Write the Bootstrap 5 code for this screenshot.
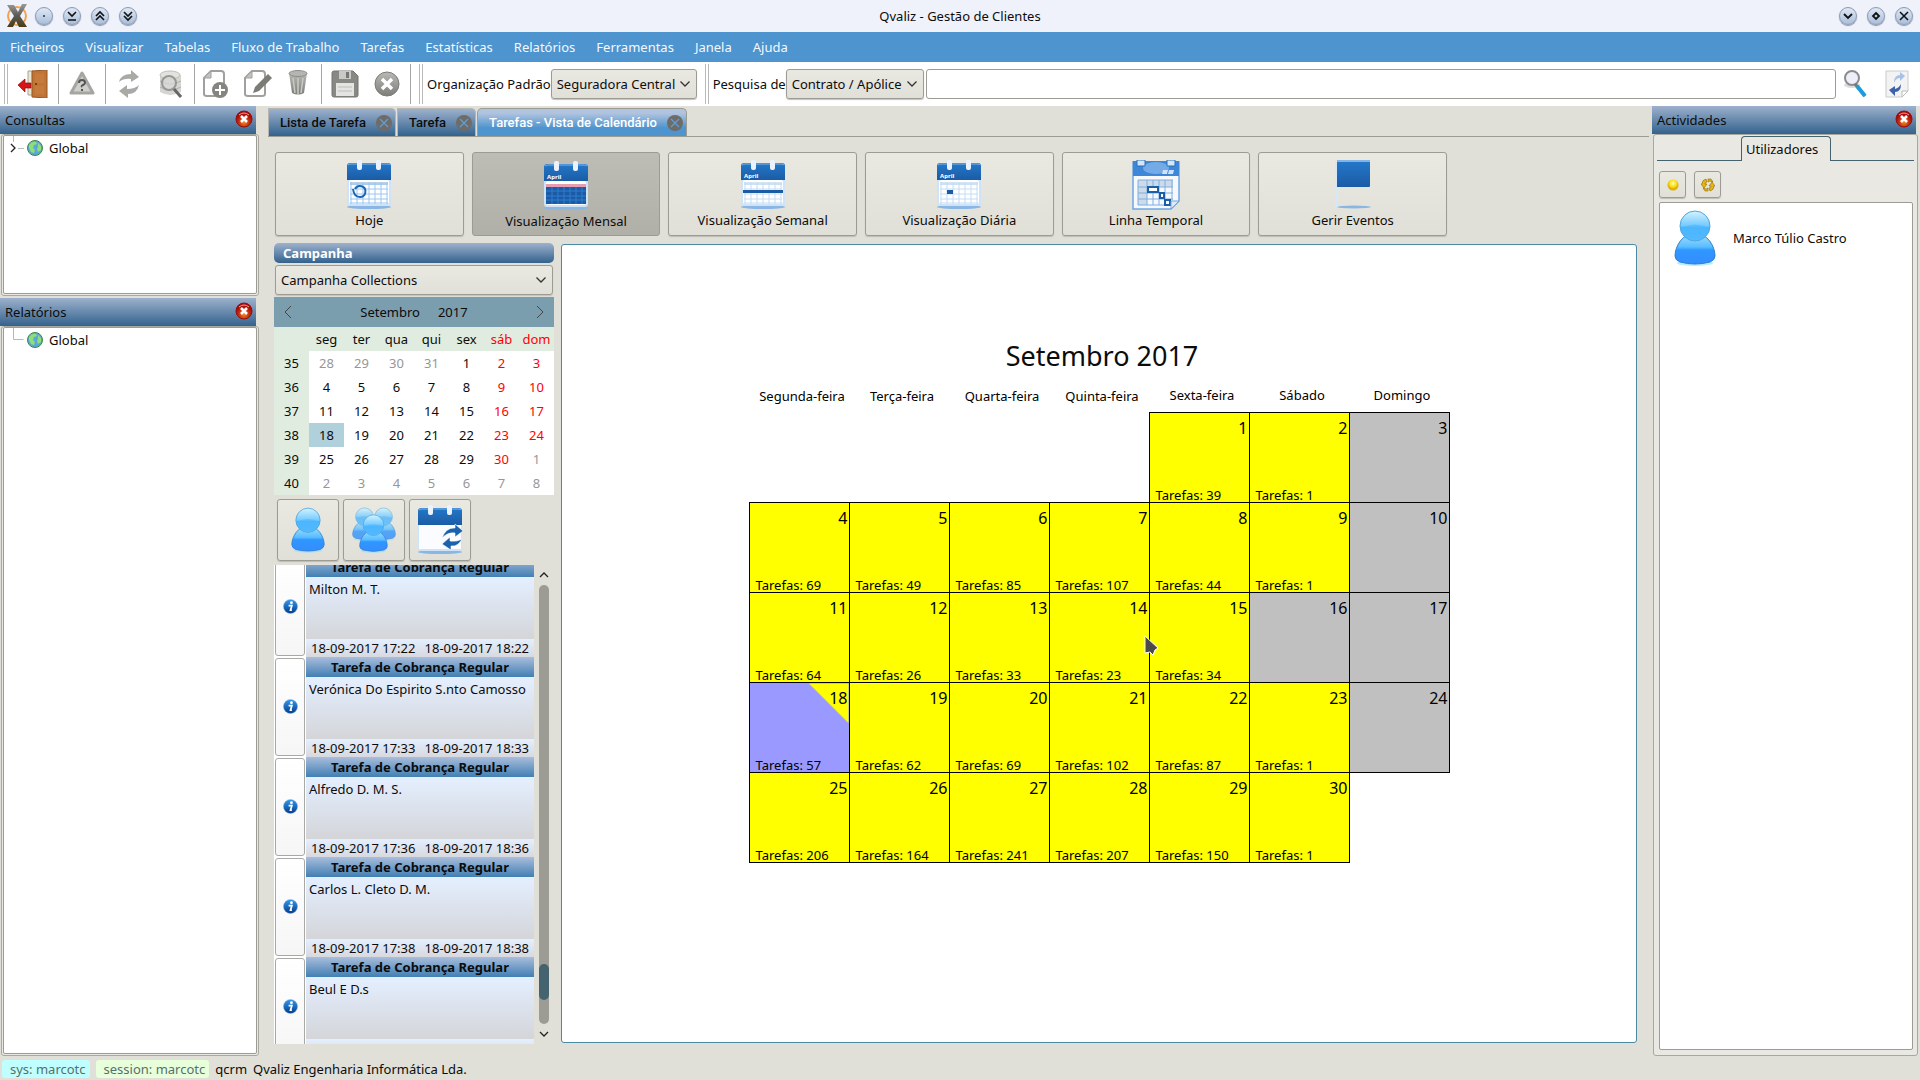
<!DOCTYPE html>
<html lang="pt">
<head>
<meta charset="utf-8">
<meta name="viewport" content="width=device-width, initial-scale=1">
<title>Qvaliz - Gestão de Clientes</title>
<link href="https://cdn.jsdelivr.net/npm/bootstrap@5.3.0/dist/css/bootstrap.min.css" rel="stylesheet">
<style>
body{font-family:"Noto Sans",sans-serif;font-size:13px;line-height:18px;color:#0c0c0c;background:#e0dfd8}
button{color:inherit}
svg{display:block;flex:none}
.titlebar{height:32px;background:#eff2fb;padding:0 7px}
.win-title{padding-right:56px}
.btn-row{gap:10px}
.round-btn{width:18px;height:18px;border:1px solid #8d9bb0;border-radius:50%;background:linear-gradient(#dfe8f5,#a9bfdc);padding:0;box-shadow:0 1px 1px #8a93a3}
.menu-strip{height:30px;background:#4e94ce}
.menu-strip a{color:#f4f8fc;padding:0 11px 0 10px;text-decoration:none;line-height:30px}
.tools{height:44px;background:#fff}
.grip{width:4px;height:40px;border:solid #b9b9b6;border-width:0 1px}
.rule{width:1px;height:40px;background:#a5a5a2}
.tool{border:0;background:none;padding:0;height:40px;width:46px;display:flex;align-items:center;justify-content:center;flex:none}
.tool.narrow{width:38px}
.tool.mid{width:42px}
.combo{height:30px;padding:0 16px 0 5px;font-size:13px;line-height:18px;color:#0c0c0c;border:1px solid #9c9b94;border-radius:3px;background:url("data:image/svg+xml,%3Csvg xmlns='http://www.w3.org/2000/svg' width='12' height='8'%3E%3Cpath d='M1.500 1.500L6 6L10.500 1.500' fill='none' stroke='%23333' stroke-width='1.300'/%3E%3C/svg%3E") no-repeat right 5px center/12px 8px,linear-gradient(#e9e9e2,#e0dfd8);box-shadow:0 1px 1px #c4c3bc}
#org{width:146px}
#kind{width:138px}
#camp{width:278px;margin:2px 1px}
.query{height:30px;border:1px solid #9c9b94;border-radius:3px;padding:0 6px;font-size:13px;margin-left:2px}
.dock-head{height:28px;background:linear-gradient(#9db1cd,#33628d);padding:0 3px 0 5px}
.dock-left{width:259px;gap:2px}
.dock-left .dock-head{margin-right:3px}
.dock-right{width:266px;margin-right:2px}
.dock-right .dock-head{margin-right:2px}
.dock-frame{border:1px solid #a8a7a0;border-radius:3px;background:#e9e8e2;margin-left:1px}
.dock-left .dock-frame{padding:0 1px 1px}
.dock-right .dock-frame{padding:1px 3px 5px}
.close-dot{border:0;background:none;padding:0;margin:0 0 3px}
.well{background:#fff;border:1px solid #9c9b94;border-radius:2px}
.node-icon{margin-top:4px}
.node-name{margin:3px 6px}
.doc-tabs{height:31px;border-bottom:1px solid #9c9b94;padding-top:2px;gap:1px}
.doc-tab{font-family:Roboto,sans-serif;font-weight:500;font-size:13px;color:#0c0c0c;background:linear-gradient(#9db1cd,#33628d);border:1px solid #b5b5b1;border-bottom:0;border-radius:0 5px 0 0;padding:1px 3px 0 11px;gap:10px;text-decoration:none}
.doc-tab.on{color:#fff;background:linear-gradient(#b1c4df 15%,#4e94ce 70%);border-color:#9c9b94;border-radius:5px 5px 0 0}
.page-main{margin:0 3px 0 9px;min-width:0}
.page-body{padding:15px 12px 12px 6px;gap:7px;min-height:0}
.view-grid{display:grid;grid-template-columns:repeat(6,1fr);gap:8px;max-width:1173px;padding-left:1px}
.face{border:1px solid #9c9b94;border-radius:3px;background:linear-gradient(#e9e9e2,#e0dfd8);box-shadow:0 1px 1px #bdbcb5;padding:0}
.view-btn{height:84px;display:flex;flex-direction:column;align-items:center;padding-top:7px;gap:1px}
.view-btn.on{background:linear-gradient(#bdbcb5,#b1b0a8);box-shadow:none;padding-top:8px}
.split{gap:7px;min-height:0}
.side{width:280px}
.camp{height:20px;background:linear-gradient(#9db1cd,#33628d);border-radius:5px;color:#fff;font-weight:700;padding:0 9px;line-height:20px}
.nav-month{height:30px;background:#7a9eae;padding:0 8px}
.nav-month .tool{width:12px}
.nav-date{gap:18px}
.mini{width:100%;table-layout:fixed;text-align:center;background:#fff}
.mini th,.mini td{height:24px;padding:0;font-weight:400}
.mini th{background:#e0ecdf}
.mini .off{color:#979797}.mini .we{color:#f00}
.mini .now{background:#b0d0dc}
.who-row{padding:4px 3px}
.who{width:62px;height:62px;display:flex;align-items:center;justify-content:center}
.feed{background:#fff;overflow:hidden}
.feed-roll{margin-top:-8px}
.job{height:100px;padding-left:1px}
.job-info{width:30px;margin:1px 0;background:linear-gradient(#fff,#f6f6f6);border:1px solid #a8a8a5;border-radius:3px;padding:0;display:flex;align-items:center;justify-content:center}
.job-main{margin-left:1px}
.job-head{height:20px;line-height:20px;font-weight:700;text-align:center;background:linear-gradient(#a9bddb,#417fb3)}
.job-name{height:62px;padding:3px;background:linear-gradient(#e4efff,#d4d5d9)}
.job-time{height:18px;padding:0 5px;background:linear-gradient(#e4efff,#d8d9de)}
.rail{width:20px}
.rail button{height:20px;width:20px;border:0;background:none;padding:0;display:flex;align-items:center;justify-content:center}
.track{width:10px;border-radius:5px;background:#9c9b94;flex:1;display:flex;flex-direction:column;padding-bottom:24px;justify-content:flex-end}
.thumb{height:36px;border-radius:5px;background:#45626f}
.board-wrap{padding:1px 0}
.board{background:#fff;border:1px solid #4a8aa5;border-radius:3px;padding-top:93px}
.month-name{font-size:27px;line-height:36px;font-weight:400;margin:0;padding-left:6px}
.month{table-layout:fixed;width:701px;border-collapse:collapse;color:#000}
.month th{height:39px;text-align:center;vertical-align:bottom;font-weight:400;padding:0 0 8px 6px}
.month td{height:90px;padding:0}
.month .busy,.month .idle{border:1px solid #000;vertical-align:top}
.month .busy{background:#ff0}.month .idle{background:#c0c0c0}
.month .today{background:linear-gradient(225deg,#ff0 28px,#99f 28px)}
.slot{height:88px;display:flex;flex-direction:column;justify-content:space-between;padding:4px 1px 0 6px}
.slot b{font-size:16px;line-height:22px;font-weight:400;text-align:right}
.slot span{line-height:12px}
.cursor{left:1144px;top:635px}
.page-tabs{height:25px}
.page-tabs i{border-bottom:1px solid #45626f}
.page-tabs i:first-child{width:84px}
.page-tab{width:90px;border:1px solid #45626f;border-bottom:0;border-radius:4px 4px 0 0;color:#0c0c0c;text-decoration:none;padding:3px 4px 0}
.tiny-row{padding:10px 2px 4px;gap:8px}
.tiny{width:27px;height:27px;display:flex;align-items:center;justify-content:center}
.users{margin:0 1px 0 2px}
.user{padding:6px 14px;gap:17px}
.status{height:24px;padding:2px 0 0 2px;gap:6px}
.pill{height:18px;border-radius:3px;color:#57706b;padding:0 4px 0 8px}
.pill-sys{background:#bfffff}
.pill-session{background:#e8ffdc}
</style>
<script src="https://cdn.jsdelivr.net/npm/bootstrap@5.3.0/dist/js/bootstrap.bundle.min.js"></script>
</head>
<body class="vh-100 d-flex flex-column overflow-hidden">
<svg width="0" height="0" class="position-absolute" aria-hidden="true">
<defs>
<linearGradient id="gBlue" x2="0" y2="1"><stop stop-color="#d4f3ff"/><stop offset=".5" stop-color="#72c9ff"/><stop offset=".55" stop-color="#4ab5ff"/><stop offset="1" stop-color="#59bfff"/></linearGradient>
<linearGradient id="gBody" x2="0" y2="1"><stop stop-color="#a8e1ff"/><stop offset=".45" stop-color="#59bdff"/><stop offset=".55" stop-color="#2f97ff"/><stop offset="1" stop-color="#358cff"/></linearGradient>
<linearGradient id="gCal" x2="0" y2="1"><stop stop-color="#2478c9"/><stop offset="1" stop-color="#1b5ba5"/></linearGradient>
<linearGradient id="gGrey" x2="0" y2="1"><stop stop-color="#b9b9b6"/><stop offset="1" stop-color="#7d7d7a"/></linearGradient>
<linearGradient id="gLogo" x2="0" y2="1"><stop stop-color="#9a9a96"/><stop offset=".5" stop-color="#5c5b57"/><stop offset="1" stop-color="#4a3b16"/></linearGradient>
<radialGradient id="gRed" cy=".7"><stop stop-color="#f08a1c"/><stop offset=".6" stop-color="#c9350f"/><stop offset="1" stop-color="#a80c0c"/></radialGradient>
<linearGradient id="gInfo" x2="0" y2="1"><stop stop-color="#2f9bf0"/><stop offset="1" stop-color="#053a86"/></linearGradient>
<radialGradient id="gSun" cy=".35"><stop stop-color="#fffbb0"/><stop offset=".6" stop-color="#fbe11c"/><stop offset="1" stop-color="#e0b000"/></radialGradient>
<symbol id="person" viewBox="0 0 42 56"><ellipse cx="21" cy="53" rx="18" ry="3" fill="#8fdcff" opacity=".6"/><path d="M21 23C9 23 1 36 1 46q0 4 5 6q15 4 30 0q5-2 5-6C41 36 33 23 21 23z" fill="url(#gBody)" stroke="#2b7fd0"/><circle cx="21" cy="16" r="15" fill="url(#gBlue)" stroke="#4ea6dd"/><path d="M7 18q14-7 28 0q-2 11-14 12Q9 29 7 18z" fill="#4cb6ff" opacity=".6"/></symbol>
<symbol id="calbase" viewBox="0 0 46 50"><ellipse cx="23" cy="47" rx="22" ry="2" fill="#8ab6e4"/><rect x="1" y="3" width="44" height="43" rx="3" fill="#cfe3f8"/><rect x="3" y="20" width="40" height="24" rx="2" fill="#fff"/><path d="M1 20V6q0-3 3-3h38q3 0 3 3v14z" fill="url(#gCal)"/><path d="M2 5q1-1 3-1h36q3 0 3 1" stroke="#7fb6ea" fill="none"/><rect x="11" y="0" width="5" height="10" rx="2" fill="#eaf3fd"/><rect x="30" y="0" width="5" height="10" rx="2" fill="#eaf3fd"/></symbol>
<symbol id="calgrid" viewBox="0 0 46 50"><path d="M4 22h38v3H4z" fill="#bdd3ea"/><path d="M4 24h38M4 29h38M4 34h38M4 39h38M4 43h38M5 22v22M11 22v22M17 22v22M23 22v22M29 22v22M35 22v22M41 22v22" stroke="#9cc6f0" stroke-width="1"/></symbol>
<symbol id="closered" viewBox="0 0 18 18"><circle cx="9" cy="9" r="8" fill="url(#gRed)" stroke="#9c0b0b"/><path d="M4 5q5-4 10 0" stroke="#f3a08c" fill="none"/><path d="M6 6l6 6M12 6l-6 6" stroke="#fff" stroke-width="2.600"/></symbol>
<symbol id="closetab" viewBox="0 0 16 16"><circle cx="8" cy="8" r="8" fill="#6e6c68"/><path d="M4 4l8 8M12 4l-8 8" stroke="#5f9fd6" stroke-width="1.200"/></symbol>
<symbol id="globe" viewBox="0 0 16 16"><circle cx="8" cy="8" r="7.500" fill="#5ba8d8" stroke="#3c8a3c"/><path d="M2 5q3-4 7-3l1 2-3 1-1 3 2 2-1 3-3-1-2-4zM11 3l3 3v4l-3 2-1-3 1-2z" fill="#8fdd7c"/></symbol>
<symbol id="info" viewBox="0 0 16 16"><circle cx="8" cy="8" r="7.500" fill="url(#gInfo)" stroke="#8fb5dc" stroke-width=".5"/><circle cx="9" cy="4" r="1.500" fill="#fff"/><path d="M6 7h3.500l-1.500 5h1.500" fill="none" stroke="#fff" stroke-width="1.800"/></symbol>
</defs>
</svg>

<header class="titlebar d-flex align-items-center flex-shrink-0">
 <svg width="20" height="24" viewBox="0 0 20 24" class="me-2"><circle cx="10" cy="12" r="9" fill="none" stroke="#f5a050" stroke-width="2"/><path d="M0 1h7l4 7 4-8h5l-7 12 7 11h-8l-3-6-3 6H0l7-11z" fill="url(#gLogo)"/></svg>
 <div class="d-flex btn-row">
  <button class="round-btn" aria-label="Menu"><svg width="16" height="16"><circle cx="8" cy="8" r="1" fill="#333"/></svg></button>
  <button class="round-btn" aria-label="Abaixo"><svg width="16" height="16" fill="none" stroke="#111" stroke-width="1.600"><path d="M4 4l4 4 4-4M4 12h8"/></svg></button>
  <button class="round-btn" aria-label="Enrolar"><svg width="16" height="16" fill="none" stroke="#111" stroke-width="1.600"><path d="M4 8l4-4 4 4M4 12l4-4 4 4"/></svg></button>
  <button class="round-btn" aria-label="Desenrolar"><svg width="16" height="16" fill="none" stroke="#111" stroke-width="1.600"><path d="M4 4l4 4 4-4M4 8l4 4 4-4"/></svg></button>
 </div>
 <div class="flex-fill text-center win-title">Qvaliz - Gestão de Clientes</div>
 <div class="d-flex btn-row">
  <button class="round-btn" aria-label="Minimizar"><svg width="16" height="16" fill="none" stroke="#111" stroke-width="1.800"><path d="M4 6l4 4 4-4"/></svg></button>
  <button class="round-btn" aria-label="Maximizar"><svg width="16" height="16" fill="none" stroke="#111" stroke-width="1.800"><path d="M8 5l3 3-3 3-3-3z"/></svg></button>
  <button class="round-btn" aria-label="Fechar"><svg width="16" height="16" fill="none" stroke="#111" stroke-width="1.600"><path d="M4 4l8 8M12 4l-8 8"/></svg></button>
 </div>
</header>

<nav class="menu-strip d-flex flex-shrink-0">
 <a href="#">Ficheiros</a><a href="#">Visualizar</a><a href="#">Tabelas</a><a href="#">Fluxo de Trabalho</a><a href="#">Tarefas</a><a href="#">Estatísticas</a><a href="#">Relatórios</a><a href="#">Ferramentas</a><a href="#">Janela</a><a href="#">Ajuda</a>
</nav>

<div class="tools d-flex align-items-center flex-shrink-0">
 <span class="grip ms-1 me-1"></span>
 <button class="tool mid" aria-label="Sair"><svg width="30" height="28" viewBox="0 0 30 28"><path d="M10 1h5v24h-5z" fill="#e9e6d6" stroke="#a8a38a"/><path d="M14 1l15-1v28l-15-1z" fill="#c07436" stroke="#96551f"/><path d="M17 4h9v9h-9zM17 16h9v8h-9z" fill="#c98043" opacity=".6"/><circle cx="18" cy="14" r="1" fill="#5e3208"/><path d="M0 15l7-6v4h6v5H7v4z" fill="#d41616" stroke="#9b0909" stroke-width=".7"/></svg></button>
 <span class="rule ms-1"></span>
 <button class="tool" aria-label="Ajuda"><svg width="26" height="26" viewBox="0 0 26 26"><path d="M13 2l11 20H2z" fill="#cfcfcc" stroke="#a5a5a2" stroke-width="3" stroke-linejoin="round"/><path d="M10 12q0-3 3-3t3 3q0 1-2 2t-1 2M13 18v2" fill="none" stroke="#555" stroke-width="2"/></svg></button>
 <span class="rule"></span>
 <button class="tool" aria-label="Actualizar"><svg width="22" height="28" viewBox="0 0 22 28" fill="#a9a9a6"><path d="M1 12Q3 4 13 4V0l8 7-8 5V9Q6 8 1 12z"/><path d="M21 15q-2 9-11 9v4l-9-7 8-6v4q8 0 12-4z"/></svg></button>
 <button class="tool narrow" aria-label="Procurar"><svg width="24" height="28" viewBox="0 0 24 28"><path d="M1 5v17q10 6 21 0V5z" fill="#d5d5d2"/><path d="M1 11q10 6 21 0M1 17q10 6 21 0" stroke="#b0b0ad" fill="none"/><ellipse cx="11" cy="5" rx="10" ry="4" fill="#e2e2df" stroke="#bebebb"/><circle cx="10" cy="13" r="7" fill="#d9d9d7" fill-opacity=".7" stroke="#979794" stroke-width="2"/><path d="M15 19l7 8" stroke="#666" stroke-width="3"/></svg></button>
 <span class="rule ms-1"></span>
 <button class="tool mid" aria-label="Novo"><svg width="26" height="28" viewBox="0 0 26 28"><path d="M8 1h10q3 0 3 3v20q0 2-3 2H4q-3 0-3-2V8z" fill="#fff" stroke="#a0a09d" stroke-width="2"/><path d="M8 1v7H1z" fill="#c2c2bf" stroke="#a0a09d"/><circle cx="17" cy="20" r="8" fill="#848481"/><path d="M17 15v10M12 20h10" stroke="#fff" stroke-width="2"/></svg></button>
 <button class="tool mid" aria-label="Editar"><svg width="28" height="28" viewBox="0 0 28 28"><path d="M8 1h10q3 0 3 3v20q0 2-3 2H4q-3 0-3-2V8z" fill="#fff" stroke="#a0a09d" stroke-width="2"/><path d="M8 1v7H1z" fill="#c2c2bf" stroke="#a0a09d"/><path d="M11 17L24 4l4 4-13 13-6 2z" fill="#7b7b78"/></svg></button>
 <button class="tool narrow" aria-label="Apagar"><svg width="20" height="28" viewBox="0 0 20 28"><path d="M1 3l3 20q6 3 12 0l3-20z" fill="url(#gGrey)"/><path d="M5 8l2 15M10 8v16M15 8l-2 15" stroke="#c9c9c6" stroke-width="1.500"/><ellipse cx="10" cy="3.500" rx="9" ry="3" fill="#b5b5b2" stroke="#8d8d8a"/></svg></button>
 <span class="rule ms-1"></span>
 <button class="tool" aria-label="Guardar"><svg width="28" height="28" viewBox="0 0 28 28"><path d="M1 3q0-2 2-2h19l5 5v19q0 2-2 2H3q-2 0-2-2z" fill="#888885" stroke="#747471"/><path d="M8 1h12v8H8z" fill="#c9c9c6"/><path d="M15 2h3v6h-3z" fill="#777"/><path d="M5 13h18v13H5z" fill="#e4e4e2"/><path d="M7 17h14M7 21h14" stroke="#bdbdba"/></svg></button>
 <button class="tool narrow" aria-label="Cancelar"><svg width="26" height="26" viewBox="0 0 26 26"><circle cx="13" cy="13" r="12" fill="url(#gGrey)" stroke="#7b7b78"/><path d="M8 8l10 10M18 8L8 18" stroke="#fff" stroke-width="3.500"/></svg></button>
 <span class="rule ms-1"></span><span class="grip ms-2 me-1"></span>
 <label for="org" class="text-nowrap">Organização Padrão</label>
 <select id="org" class="form-select combo flex-shrink-0"><option>Seguradora Central</option></select>
 <span class="grip ms-2 me-1"></span>
 <label for="kind" class="text-nowrap">Pesquisa de</label>
 <select id="kind" class="form-select combo flex-shrink-0"><option>Contrato / Apólice</option></select>
 <input class="query flex-fill" type="text" aria-label="Pesquisa">
 <button class="tool narrow" aria-label="Pesquisar"><svg width="24" height="28" viewBox="0 0 24 28"><ellipse cx="9" cy="15" rx="8" ry="3" fill="#dcdcdc"/><circle cx="9" cy="8" r="7" fill="#eeeefa" stroke="#8c8c90" stroke-width="2"/><path d="M12 14l10 12" stroke="#777" stroke-width="3"/><path d="M14 16l8 10" stroke="#1b9ddd" stroke-width="4"/></svg></button>
 <button class="tool" aria-label="Recarregar"><svg width="24" height="28" viewBox="0 0 24 28"><path d="M1 1h22v20l-6 6H1z" fill="#f3f3f3" stroke="#ccc"/><path d="M17 27v-6h6z" fill="#fff" stroke="#bbb"/><path d="M9 13q0-8 6-8V2l5 4-5 5V8q-4 0-6 5z" fill="#a7c2e8"/><path d="M16 14q0 8-6 8v4l-6-6 6-4v3q4-1 6-5z" fill="#3b62ab"/></svg></button>
</div>

<div class="flex-fill d-flex" style="min-height:0">
 <aside class="dock-left d-flex flex-column flex-shrink-0">
  <section class="d-flex flex-column" style="height:190px">
   <div class="dock-head d-flex align-items-center"><span class="flex-fill">Consultas</span><button class="close-dot" aria-label="Fechar Consultas"><svg width="18" height="18"><use href="#closered"/></svg></button></div>
   <div class="dock-frame flex-fill d-flex"><div class="well flex-fill d-flex align-items-start">
    <svg width="23" height="26"><path d="M9.500 0v6M14 12.500h6" stroke="#b8b8b5"/><path d="M7 8l4 4-4 4" fill="none" stroke="#222" stroke-width="1.300"/></svg>
    <svg width="16" height="16" class="node-icon"><use href="#globe"/></svg><span class="node-name">Global</span></div></div>
  </section>
  <section class="flex-fill d-flex flex-column">
   <div class="dock-head d-flex align-items-center"><span class="flex-fill">Relatórios</span><button class="close-dot" aria-label="Fechar Relatórios"><svg width="18" height="18"><use href="#closered"/></svg></button></div>
   <div class="dock-frame flex-fill d-flex"><div class="well flex-fill d-flex align-items-start">
    <svg width="23" height="26"><path d="M9.500 0v11.500h10" fill="none" stroke="#b8b8b5"/></svg>
    <svg width="16" height="16" class="node-icon"><use href="#globe"/></svg><span class="node-name">Global</span></div></div>
  </section>
 </aside>

 <main class="page-main flex-fill d-flex flex-column">
  <div class="doc-tabs d-flex">
   <a href="#" class="doc-tab d-flex align-items-center">Lista de Tarefa<svg width="16" height="16"><use href="#closetab"/></svg></a>
   <a href="#" class="doc-tab d-flex align-items-center">Tarefa<svg width="16" height="16"><use href="#closetab"/></svg></a>
   <a href="#" class="doc-tab on d-flex align-items-center">Tarefas - Vista de Calendário<svg width="16" height="16"><use href="#closetab"/></svg></a>
  </div>
  <div class="page-body flex-fill d-flex flex-column">
   <div class="view-grid">
    <button class="face view-btn"><svg width="46" height="50"><use href="#calbase"/><use href="#calgrid"/><path d="M7 29q1 8 7 8a5.500 5.500 0 1 0-5-8" fill="none" stroke="#1c67b5" stroke-width="2"/></svg>Hoje</button>
    <button class="face view-btn on"><svg width="46" height="50"><use href="#calbase"/><path d="M3 25h40v18H3z" fill="#1b5ba5"/><path d="M3 23h40v3H3z" fill="#e79db1"/><path d="M3 30h40M3 35h40M3 39h40M9 26v17M15 26v17M21 26v17M27 26v17M33 26v17M39 26v17" stroke="#2f7fd0"/><text x="4" y="18" font-size="6" font-weight="700" fill="#fff">April</text></svg>Visualização Mensal</button>
    <button class="face view-btn"><svg width="46" height="50"><use href="#calbase"/><use href="#calgrid" opacity=".6"/><path d="M3 30h40v3H3z" fill="#1b5ba5"/><text x="4" y="18" font-size="6" font-weight="700" fill="#fff">April</text></svg>Visualização Semanal</button>
    <button class="face view-btn"><svg width="46" height="50"><use href="#calbase"/><use href="#calgrid" opacity=".6"/><path d="M11 30h6v4h-6z" fill="#1b5ba5"/><text x="4" y="18" font-size="6" font-weight="700" fill="#fff">April</text></svg>Visualização Diária</button>
    <button class="face view-btn"><svg width="50" height="50" viewBox="0 0 50 50"><path d="M2 2h46v39l-8 8H2z" fill="#f5f9fe" stroke="#6da6df" stroke-width="1.500"/><path d="M2 1h46v15H2z" fill="#3e87d8"/><ellipse cx="25" cy="8" rx="13" ry="6" fill="#8cbaec" opacity=".7"/><path d="M6 0h8v6H6zM36 0h8v6h-8z" fill="#d5e6f9" stroke="#2a6fbe"/><path d="M32 10h5l-1 4h-5zM38 10h5l-1 4h-5z" fill="#cfe2f7"/><path d="M7 20h35v7H7zM7 27h9v18H7z" fill="#cddbe9"/><path d="M7 20h35M7 27h35M7 33h35M7 39h35M7 45h30M7 20v25M16 20v25M22 20v25M28 20v25M34 20v25M41 20v20" stroke="#7faee0" fill="none"/><path d="M17 27h10v5H17zM29 33h4v5h-4zM34 40h5v5h-5z" fill="#fff" stroke="#1c5fa9" stroke-width="2"/><path d="M40 49v-8h8z" fill="#dceafa" stroke="#6da6df"/></svg>Linha Temporal</button>
    <button class="face view-btn"><svg width="38" height="50"><ellipse cx="20" cy="47" rx="17" ry="1.500" fill="#8ab6e4"/><path d="M1 1h3v46H1z" fill="#d6e7fa"/><path d="M3 1h33v25q0 1-1 1H3z" fill="url(#gCal)"/><path d="M3 1h33" stroke="#82b5e6" stroke-width="2"/></svg>Gerir Eventos</button>
   </div>
   <div class="split flex-fill d-flex">
    <div class="side d-flex flex-column flex-shrink-0">
     <label class="camp" for="camp">Campanha</label>
     <select id="camp" class="form-select combo flex-shrink-0"><option>Campanha Collections</option></select>
     <div class="nav-month d-flex align-items-center justify-content-between flex-shrink-0">
      <button class="tool" aria-label="Mês anterior"><svg width="12" height="14"><path d="M9 1L3 7l6 6" fill="none" stroke="#444"/></svg></button>
      <span class="d-flex nav-date"><span>Setembro</span><span>2017</span></span>
      <button class="tool" aria-label="Mês seguinte"><svg width="12" height="14"><path d="M3 1l6 6-6 6" fill="none" stroke="#444"/></svg></button>
     </div>
     <table class="mini"><thead><tr><th></th><th>seg</th><th>ter</th><th>qua</th><th>qui</th><th>sex</th><th class="we">sáb</th><th class="we">dom</th></tr></thead><tbody id="mini"></tbody></table>
     <div class="d-flex gap-1 who-row">
      <button class="face who" aria-label="Utilizador"><svg width="34" height="46"><use href="#person"/></svg></button>
      <button class="face who" aria-label="Grupo"><svg width="46" height="46"><use href="#person" width="25" height="34" x="1" opacity=".8"/><use href="#person" width="25" height="34" x="20" opacity=".8"/><use href="#person" width="29" height="39" x="8" y="7"/></svg></button>
      <button class="face who" aria-label="Actualizar calendário"><svg width="46" height="50"><use href="#calbase"/><path d="M2 20h42v24H2z" fill="#fafcff"/><path d="M25 33q4-11 13-10v-4l8 7-8 6v-4q-7-1-13 5zM45 34q-4 8-11 7v4l-9-6 8-7v4q7 1 12-2z" fill="#1b62ac" stroke="#fff" stroke-width=".6"/></svg></button>
     </div>
     <div class="d-flex flex-fill" style="min-height:0">
      <div class="feed flex-fill"><div class="feed-roll" id="feed"></div></div>
      <div class="rail d-flex flex-column align-items-center">
       <button aria-label="Subir"><svg width="10" height="7"><path d="M1 6l4-4 4 4" fill="none" stroke="#222" stroke-width="1.300"/></svg></button>
       <div class="track"><div class="thumb"></div></div>
       <button aria-label="Descer"><svg width="10" height="7"><path d="M1 1l4 4 4-4" fill="none" stroke="#222" stroke-width="1.300"/></svg></button>
      </div>
     </div>
    </div>
    <div class="board-wrap flex-fill d-flex">
     <section class="board flex-fill d-flex flex-column align-items-center">
      <h1 class="month-name">Setembro 2017</h1>
      <table class="month"><thead><tr><th>Segunda-feira</th><th>Terça-feira</th><th>Quarta-feira</th><th>Quinta-feira</th><th>Sexta-feira</th><th>Sábado</th><th>Domingo</th></tr></thead><tbody id="month"></tbody></table>
     </section>
    </div>
   </div>
  </div>
 </main>

 <aside class="dock-right d-flex flex-column flex-shrink-0">
  <div class="dock-head d-flex align-items-center"><span class="flex-fill">Actividades</span><button class="close-dot" aria-label="Fechar Actividades"><svg width="18" height="18"><use href="#closered"/></svg></button></div>
  <div class="dock-frame flex-fill d-flex flex-column">
   <div class="page-tabs d-flex"><i></i><a href="#" class="page-tab">Utilizadores</a><i class="flex-fill"></i></div>
   <div class="d-flex tiny-row">
    <button class="face tiny" aria-label="Estado"><svg width="12" height="12"><circle cx="6" cy="6" r="5.500" fill="url(#gSun)"/></svg></button>
    <button class="face tiny" aria-label="Actualizar"><svg width="14" height="14" fill="#e9b50c" stroke="#8f6c00" stroke-width=".6"><path d="M5 1q-4 1-4 5H0l3 4 3-4H4q0-2 2-2zM9 13q4-1 4-5h1l-3-4-3 4h2q0 2-2 2zM7 1h3l2 3-3-1-2 1zM7 13H4l-2-3 3 1 2-1z"/></svg></button>
   </div>
   <div class="well users flex-fill"><div class="d-flex align-items-center user"><svg width="42" height="58"><use href="#person"/></svg><span>Marco Túlio Castro</span></div></div>
  </div>
 </aside>
</div>

<footer class="status d-flex align-items-center flex-shrink-0">
 <span class="pill pill-sys">sys: marcotc</span>
 <span class="pill pill-session">session: marcotc</span>
 <span>qcrm</span><span>Qvaliz Engenharia Informática Lda.</span>
</footer>

<svg class="position-absolute cursor" width="15" height="22" aria-hidden="true"><path d="M1 1v17l5-1 3 3 2-5 3-2z" fill="#4a4a4a" stroke="#fff"/></svg>

<script>
// Mini calendar: weeks 35 to 40, starting on Monday 28 August
const mini = document.getElementById('mini');
for (let w = 0; w < 6; w++) {
  let row = `<tr><th>${35 + w}</th>`;
  for (let d = 0; d < 7; d++) {
    const n = w * 7 + d - 3;
    const day = n < 1 ? n + 31 : n > 30 ? n - 30 : n;
    const cls = n < 1 || n > 30 ? 'off' : n === 18 ? 'now' : d > 4 ? 'we' : '';
    row += `<td class="${cls}">${day}</td>`;
  }
  mini.innerHTML += row + '</tr>';
}
// Tasks per day of September
const load = {1:39,2:1,4:69,5:49,6:85,7:107,8:44,9:1,11:64,12:26,13:33,14:23,15:34,18:57,19:62,20:69,21:102,22:87,23:1,25:206,26:164,27:241,28:207,29:150,30:1};
const month = document.getElementById('month');
for (let w = 0; w < 5; w++) {
  let row = '<tr>';
  for (let d = 0; d < 7; d++) {
    const n = w * 7 + d - 3;
    if (n < 1 || n > 30) { row += '<td></td>'; continue; }
    row += `<td class="${load[n] ? 'busy' : 'idle'}${n === 18 ? ' today' : ''}"><div class="slot"><b>${n}</b>${load[n] ? `<span>Tarefas: ${load[n]}</span>` : ''}</div></td>`;
  }
  month.innerHTML += row + '</tr>';
}
// Regular collection tasks
const jobs = [['Milton M. T.','17:22','18:22'],['Verónica Do Espirito S.nto Camosso','17:33','18:33'],['Alfredo D. M. S.','17:36','18:36'],['Carlos L. Cleto D. M.','17:38','18:38'],['Beul E D.s','','']];
document.getElementById('feed').innerHTML = jobs.map(([name, a, b]) => `<div class="job d-flex"><button class="job-info" aria-label="Detalhes"><svg width="15" height="15"><use href="#info"/></svg></button><div class="job-main flex-fill"><div class="job-head">Tarefa de Cobrança Regular</div><div class="job-name">${name}</div><div class="job-time d-flex justify-content-between">${a ? `<span>18-09-2017 ${a}</span><span>18-09-2017 ${b}</span>` : ''}</div></div></div>`).join('');
</script>
</body>
</html>
